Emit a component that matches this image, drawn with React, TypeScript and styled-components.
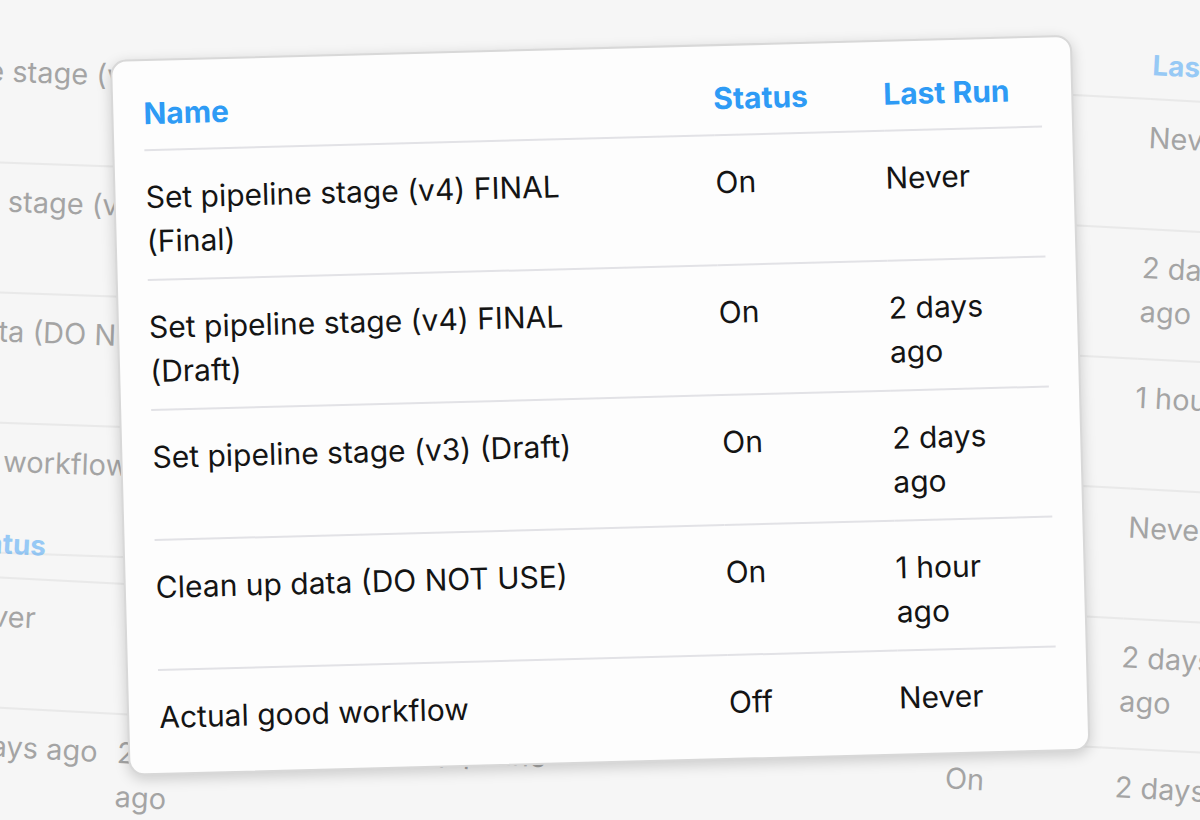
import React from "react";
import styled, { createGlobalStyle } from "styled-components";

const Global = createGlobalStyle`
  html, body { margin: 0; padding: 0; background: #f7f7f7; }
  body { font-family: Inter, "Noto Sans", sans-serif; }
`;

const Stage = styled.div`
  position: relative;
  width: 1200px;
  height: 820px;
  overflow: hidden;
  background: #f6f6f6;
`;

const BgTable = styled.div<{ $x: number; $y: number; $rot: number }>`
  position: absolute;
  left: ${(p) => p.$x}px;
  top: ${(p) => p.$y}px;
  width: 1000px;
  transform: rotate(${(p) => p.$rot}deg);
  transform-origin: 0 0;
  opacity: 0.5;
  display: grid;
  grid-template-columns: 560px 170px 150px;
`;

const BgHead = styled.div`
  color: #3a9ef5;
  font-weight: 700;
  font-size: 28px;
  padding: 10px 0 16px;
  border-bottom: 2px solid #ddd;
`;

const BgCell = styled.div`
  color: #555;
  font-size: 29px;
  height: 130px;
  box-sizing: border-box;
  padding-top: 16px;
  line-height: 44px;
  border-bottom: 2px solid #ddd;
`;

const Card = styled.div`
  position: absolute;
  left: 110px;
  top: 60px;
  width: 962px;
  height: 716px;
  background: #fdfdfd;
  border: 2px solid #d8d8d8;
  border-radius: 16px;
  box-shadow: 0 4px 14px rgba(0, 0, 0, 0.18);
  transform: rotate(-1.5deg);
  transform-origin: 0 0;
  padding: 22px 30px 0 30px;
  box-sizing: border-box;
`;

const Grid = styled.div`
  display: grid;
  grid-template-columns: 570px 170px 1fr;
`;

const Head = styled.div`
  color: #2e9bf5;
  font-weight: 700;
  font-size: 30px;
  padding: 12px 0 18px;
  border-bottom: 2px solid #e2e2e6;
`;

const Cell = styled.div<{ $w: number }>`
  color: #141414;
  font-size: 30px;
  line-height: 44px;
  height: 130px;
  box-sizing: border-box;
  padding-top: 24px;
  padding-right: ${(p) => p.$w}px;
  border-bottom: 2px solid #e2e2e6;
  &:nth-last-child(-n + 3) { border-bottom: none; }
`;

const rows = [
  ["Set pipeline stage (v4) FINAL (Final)", "On", "Never"],
  ["Set pipeline stage (v4) FINAL (Draft)", "On", "2 days ago"],
  ["Set pipeline stage (v3) (Draft)", "On", "2 days ago"],
  ["Clean up data (DO NOT USE)", "On", "1 hour ago"],
  ["Actual good workflow", "Off", "Never"],
];

const bgRows = [
  ["Set pipeline stage (v4) FINAL", "On", "Never"],
  ["Set pipeline stage (v4)", "On", "2 days ago"],
  ["Clean up data (DO NOT USE)", "On", "1 hour ago"],
  ["Actual good workflow", "Off", "Never"],
  ["Set pipeline stage", "On", "2 days ago"],
  ["Set pipeline", "On", "2 days ago"],
];

export default function App() {
  return (
    <Stage>
      <Global />
      <BgTable $x={425} $y={0} $rot={3}>
        <BgHead></BgHead>
        <BgHead>Status</BgHead>
        <BgHead>Last Run</BgHead>
        {bgRows.map((r, i) => (
          <React.Fragment key={i}>
            <BgCell>{r[0]}</BgCell>
            <BgCell>{r[1]}</BgCell>
            <BgCell>{r[2]}</BgCell>
          </React.Fragment>
        ))}
      </BgTable>
      <BgTable $x={-155} $y={28} $rot={2}>
        {bgRows.slice(0, 4).map((r, i) => (
          <React.Fragment key={i}>
            <BgCell>{r[0]}</BgCell>
            <BgCell>{r[1]}</BgCell>
            <BgCell>{r[2]}</BgCell>
          </React.Fragment>
        ))}
      </BgTable>
      <BgTable $x={-600} $y={485} $rot={3}>
        <BgHead>Name</BgHead>
        <BgHead>Status</BgHead>
        <BgHead>Last Run</BgHead>
        <BgCell>Set pipeline stage</BgCell>
        <BgCell>Never</BgCell>
        <BgCell>Never</BgCell>
        <BgCell>Set pipeline</BgCell>
        <BgCell>2 days ago</BgCell>
        <BgCell>2 days ago</BgCell>
      </BgTable>
      <Card>
        <Grid>
          <Head>Name</Head>
          <Head>Status</Head>
          <Head>Last Run</Head>
          {rows.map((r, i) => (
            <React.Fragment key={i}>
              <Cell $w={80}>{r[0]}</Cell>
              <Cell $w={0}>{r[1]}</Cell>
              <Cell $w={40}>{r[2]}</Cell>
            </React.Fragment>
          ))}
        </Grid>
      </Card>
    </Stage>
  );
}
